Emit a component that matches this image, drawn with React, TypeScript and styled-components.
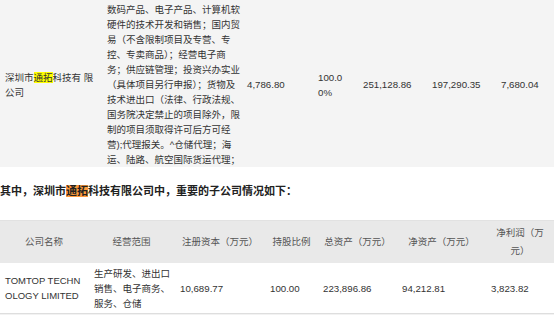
import React from "react";
import styled, { createGlobalStyle } from "styled-components";

const Global = createGlobalStyle`
  html, body { margin: 0; padding: 0; background: #ffffff; }
  body {
    font-family: "Liberation Sans", "Noto Sans CJK SC", sans-serif;
    color: #333333;
  }
`;

const Page = styled.div`
  width: 554px;
  height: 317px;
  overflow: hidden;
  display: flex;
  flex-direction: column;
`;

const InfoTable = styled.div`
  display: grid;
  grid-template-columns: 101px 141px 70px 45px 70px 68px 1fr;
  align-items: center;
  background: #f4f4f4;
  height: 168px;
  padding-top: 2px;
  box-sizing: border-box;
  border-bottom: 1px solid #ffffff;
  font-size: 9.5px;
  line-height: 15px;
`;

const Cell = styled.div<{ $pl?: number }>`
  padding-left: ${(p) => p.$pl ?? 5}px;
  white-space: nowrap;
`;

const Num = styled(Cell)`
  font-size: 9.7px;
`;

const Line = styled.span`
  display: block;
  white-space: nowrap;
`;

const Mark = styled.span<{ $tone: "yellow" | "orange" }>`
  background: ${(p) => (p.$tone === "yellow" ? "#ffff00" : "#ff9a3c")};
`;

const Intro = styled.p`
  margin: 15px 0 0 0;
  font-size: 11px;
  line-height: 16px;
  font-weight: bold;
  color: #222222;
  white-space: nowrap;
`;

const SubTable = styled.div`
  margin-top: 21px;
  display: flex;
  flex-direction: column;
`;

const Row = styled.div`
  display: grid;
  grid-template-columns: 88px 87px 90px 53px 79px 89px 1fr;
  align-items: center;
`;

const HeadRow = styled(Row)`
  height: 43px;
  background: #e9e9e9;
  border-top: 1px solid #e2e2e2;
  box-sizing: border-box;
`;

const HeadCell = styled.div`
  text-align: center;
  font-size: 9.5px;
  line-height: 18px;
  color: #555555;
  white-space: nowrap;
`;

const BodyRow = styled(Row)`
  height: 50px;
  background: #ffffff;
  border-bottom: 1px solid #dedede;
  font-size: 9.5px;
  line-height: 15px;
`;

const BodyCell = styled.div<{ $pl?: number }>`
  padding-left: ${(p) => p.$pl ?? 5}px;
  white-space: nowrap;
  color: #333333;
`;

const BodyNum = styled(BodyCell)`
  font-size: 9.7px;
`;

const Under = styled.div`
  height: 1px;
  background: #f2f2f2;
`;

const scopeLines = [
  "数码产品、电子产品、计算机软",
  "硬件的技术开发和销售；国内贸",
  "易（不含限制项目及专营、专",
  "控、专卖商品）；经营电子商",
  "务；供应链管理；投资兴办实业",
  "（具体项目另行申报）；货物及",
  "技术进出口（法律、行政法规、",
  "国务院决定禁止的项目除外，限",
  "制的项目须取得许可后方可经",
  "营);代理报关。^仓储代理；海",
  "运、陆路、航空国际货运代理；",
];

const headers: React.ReactNode[] = [
  "公司名称",
  "经营范围",
  "注册资本（万元）",
  "持股比例",
  "总资产（万元）",
  "净资产（万元）",
  (
    <>
      净利润（万
      <br />
      元）
    </>
  ),
];

export default function App() {
  return (
    <Page>
      <Global />
      <InfoTable>
        <Cell $pl={5}>
          <Line>
            深圳市<Mark $tone="yellow">通拓</Mark>科技有 限
          </Line>
          <Line>公司</Line>
        </Cell>
        <Cell $pl={6}>
          {scopeLines.map((l, i) => (
            <Line key={i}>{l}</Line>
          ))}
        </Cell>
        <Num $pl={5}>4,786.80</Num>
        <Num $pl={6}>
          <Line>100.0</Line>
          <Line>0%</Line>
        </Num>
        <Num $pl={6}>251,128.86</Num>
        <Num $pl={5}>197,290.35</Num>
        <Num $pl={6}>7,680.04</Num>
      </InfoTable>

      <Intro>
        其中，深圳市<Mark $tone="orange">通拓</Mark>科技有限公司中，重要的子公司情况如下：
      </Intro>

      <SubTable>
        <HeadRow>
          {headers.map((h, i) => (
            <HeadCell key={i}>{h}</HeadCell>
          ))}
        </HeadRow>
        <BodyRow>
          <BodyCell $pl={5}>
            <Line>TOMTOP TECHN</Line>
            <Line>OLOGY LIMITED</Line>
          </BodyCell>
          <BodyCell $pl={6}>
            <Line>生产研发、进出口</Line>
            <Line>销售、电子商务、</Line>
            <Line>服务、仓储</Line>
          </BodyCell>
          <BodyNum $pl={5}>10,689.77</BodyNum>
          <BodyNum $pl={5}>100.00</BodyNum>
          <BodyNum $pl={5}>223,896.86</BodyNum>
          <BodyNum $pl={5}>94,212.81</BodyNum>
          <BodyNum $pl={5}>3,823.82</BodyNum>
        </BodyRow>
        <Under />
      </SubTable>
    </Page>
  );
}
